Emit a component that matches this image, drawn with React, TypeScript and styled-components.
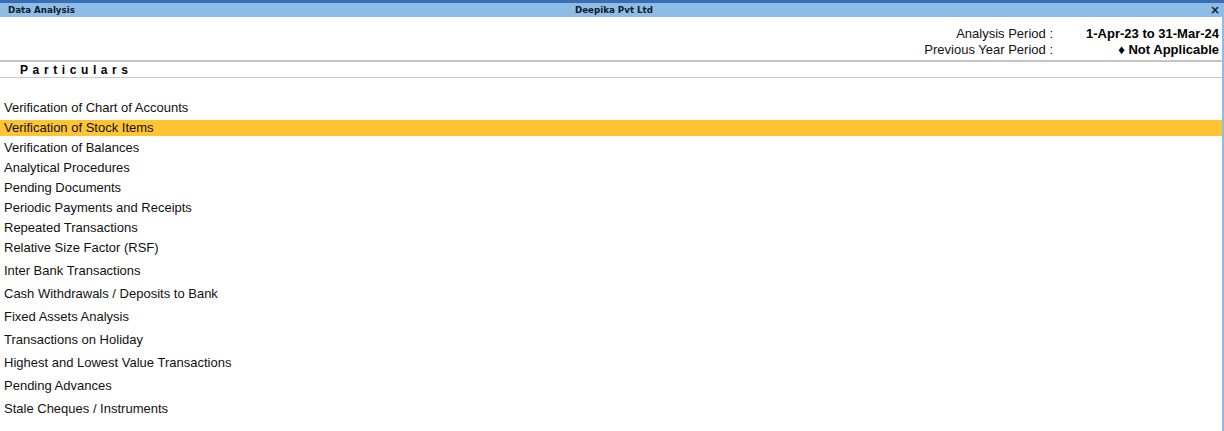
import React from 'react';
import styled, { createGlobalStyle } from 'styled-components';

const GlobalStyle = createGlobalStyle`
  html, body {
    margin: 0;
    padding: 0;
    background: #ffffff;
  }
  body {
    font-family: "Liberation Sans", Arial, sans-serif;
    color: #000;
  }
`;

const Window = styled.div`
  width: 1224px;
  height: 431px;
  display: flex;
  flex-direction: column;
  overflow: hidden;
  border-top: 3px solid #3a6db3;
  box-sizing: border-box;
`;

const TitleBar = styled.div`
  height: 14px;
  background: #8dbde6;
  display: grid;
  grid-template-columns: 1fr auto 1fr;
  align-items: center;
  padding: 0 4px 0 8px;
  font-family: "DejaVu Sans", Tahoma, sans-serif;
  font-size: 8.7px;
  font-weight: bold;
  color: #0d1a2a;
`;

const TitleRight = styled.div`
  justify-self: end;
  font-size: 12px;
  line-height: 14px;
`;

const Body = styled.div`
  flex: 1;
  display: flex;
  flex-direction: column;
  border-right: 2px solid #8dbde6;
`;

const PeriodBlock = styled.div`
  display: grid;
  grid-template-columns: 1fr auto 166px;
  padding: 9px 3px 2px 0;
  font-size: 13px;
  line-height: 16px;
`;

const PeriodLabel = styled.div`
  grid-column: 2;
  text-align: right;
  color: #111;
`;

const PeriodValue = styled.div`
  grid-column: 3;
  text-align: right;
  font-weight: bold;
`;

const HeaderRow = styled.div`
  border-top: 2px solid #c4c4c4;
  border-bottom: 1px solid #c8c8c8;
  height: 15px;
  display: flex;
  align-items: center;
  padding-left: 20px;
  font-size: 12px;
  font-weight: bold;
  letter-spacing: 4.6px;
`;

const List = styled.div`
  display: flex;
  flex-direction: column;
  padding-top: 22px;
`;

const Row = styled.div<{ $active?: boolean; $gap: number }>`
  height: 16px;
  line-height: 16px;
  margin-bottom: ${(p) => p.$gap}px;
  padding-left: 4px;
  font-size: 13px;
  background: ${(p) => (p.$active ? '#fec433' : 'transparent')};
  color: #111;
`;

const items = [
  'Verification of Chart of Accounts',
  'Verification of Stock Items',
  'Verification of Balances',
  'Analytical Procedures',
  'Pending Documents',
  'Periodic Payments and Receipts',
  'Repeated Transactions',
  'Relative Size Factor (RSF)',
  'Inter Bank Transactions',
  'Cash Withdrawals / Deposits to Bank',
  'Fixed Assets Analysis',
  'Transactions on Holiday',
  'Highest and Lowest Value Transactions',
  'Pending Advances',
  'Stale Cheques / Instruments',
];

export default function App() {
  return (
    <>
      <GlobalStyle />
      <Window>
        <TitleBar>
          <div>Data Analysis</div>
          <div>Deepika Pvt Ltd</div>
          <TitleRight>×</TitleRight>
        </TitleBar>
        <Body>
          <PeriodBlock>
            <PeriodLabel>Analysis Period :</PeriodLabel>
            <PeriodValue>1-Apr-23 to 31-Mar-24</PeriodValue>
            <PeriodLabel>Previous Year Period :</PeriodLabel>
            <PeriodValue>♦ Not Applicable</PeriodValue>
          </PeriodBlock>
          <HeaderRow>Particulars</HeaderRow>
          <List>
            {items.map((text, i) => (
              <Row key={text} $active={i === 1} $gap={i < 7 ? 4 : 7}>
                {text}
              </Row>
            ))}
          </List>
        </Body>
      </Window>
    </>
  );
}
